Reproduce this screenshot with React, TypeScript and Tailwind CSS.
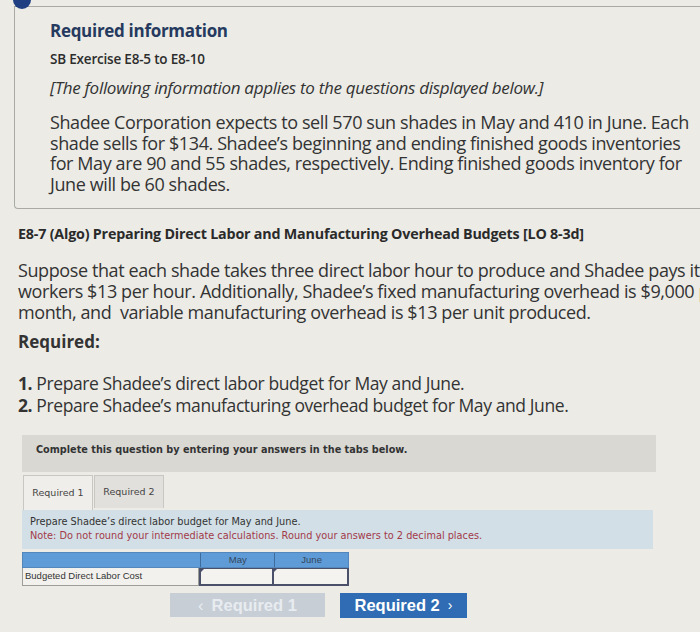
import React from 'react';

const App: React.FC = () => {
  const tabs = ['Required 1', 'Required 2'];

  return (
    <div className="w-[700px] h-[632px] overflow-hidden bg-[#ecebe6] text-[#2a2a2a] relative" style={{ fontFamily: '"Open Sans", sans-serif' }}>
      {/* Required information box */}
      <div className="relative ml-[14px] mt-[6px] h-[203px] border-l border-t border-b border-[#a9a9a6] rounded-bl-[4px] pl-[35px] pt-[12px]">
        <div className="absolute -left-[2px] -top-[16px] w-[18px] h-[18px] rounded-full bg-[#1f3f82]" />
        <h1 className="text-[17px] font-bold text-[#253a5e] leading-[24px] tracking-[-0.3px]">Required information</h1>
        <div className="mt-[8px] text-[13.5px] font-semibold text-[#2d2d2d] leading-[16px] tracking-[-0.2px]">SB Exercise E8-5 to E8-10</div>
        <p className="mt-[10px] text-[17px] italic leading-[22px] text-[#333] tracking-[-0.3px]">
          [The following information applies to the questions displayed below.]
        </p>
        <p className="mt-[13px] text-[18px] leading-[20.5px] text-[#333] tracking-[-0.4px] whitespace-nowrap">
          Shadee Corporation expects to sell 570 sun shades in May and 410 in June. Each<br />
          shade sells for $134. Shadee’s beginning and ending finished goods inventories<br />
          for May are 90 and 55 shades, respectively. Ending finished goods inventory for<br />
          June will be 60 shades.
        </p>
      </div>

      <div className="pl-[18px]">
        <h2 className="mt-[16px] text-[14.3px] font-bold leading-[18px] text-[#2a2a2a] tracking-[-0.2px] whitespace-nowrap">
          E8-7 (Algo) Preparing Direct Labor and Manufacturing Overhead Budgets [LO 8-3d]
        </h2>
        <p className="mt-[17px] text-[18px] leading-[21px] text-[#333] tracking-[-0.4px] whitespace-nowrap">
          Suppose that each shade takes three direct labor hour to produce and Shadee pays its<br />
          workers $13 per hour. Additionally, Shadee’s fixed manufacturing overhead is $9,000 per<br />
          month, and&nbsp; variable manufacturing overhead is $13 per unit produced.
        </p>
        <div className="mt-[8px] text-[17px] font-bold leading-[22px] text-[#333]">Required:</div>
        <ol className="mt-[19px] text-[17.5px] leading-[22px] text-[#333] tracking-[-0.4px]">
          <li><span className="font-bold">1.</span> Prepare Shadee’s direct labor budget for May and June.</li>
          <li><span className="font-bold">2.</span> Prepare Shadee’s manufacturing overhead budget for May and June.</li>
        </ol>
      </div>

      <div className="ml-[22px] w-[634px] mt-[19px]" style={{ fontFamily: '"DejaVu Sans", sans-serif' }}>
        <div className="h-[37px] bg-[#d9d8d3] pl-[14px] pt-[8px] text-[9.7px] font-bold text-[#333]">
          Complete this question by entering your answers in the tabs below.
        </div>

        <div className="mt-[3px] flex h-[35px]">
          {tabs.map((t, i) => (
            <div
              key={t}
              className={`w-[70px] ${i === 0 ? 'bg-[#efeeea] h-[35px]' : 'bg-[#e2e0dc] h-[33px]'} border border-[#c9c7c2] border-b-0 ml-[1px] flex items-center justify-center text-[9.5px] text-[#444]`}
            >
              {t}
            </div>
          ))}
        </div>

        <div className="h-[39px] w-[631px] bg-[#d2dfe6] pl-[8px] pt-[5px] text-[9.75px] leading-[13.5px]">
          <div className="text-[#333]">Prepare Shadee’s direct labor budget for May and June.</div>
          <div className="text-[#a23a4a]">Note: Do not round your intermediate calculations. Round your answers to 2 decimal places.</div>
        </div>

        <div className="mt-[3px] w-[327px] text-[9.5px]" style={{ fontFamily: '"Liberation Sans", Arial, sans-serif' }}>
          <div className="flex h-[16px] bg-[#5f9bd6] border border-[#5386bb]">
            <div className="w-[178px]" />
            <div className="w-[74px] border-l border-[#3e6c9c] flex items-center justify-center text-[#34465c]">May</div>
            <div className="w-[74px] border-l border-[#3e6c9c] flex items-center justify-center text-[#34465c]">June</div>
          </div>
          <div className="flex h-[18px] bg-[#f2f1ee]">
            <div className="w-[178px] border border-[#9d9c99] border-t-0 flex items-center pl-[2px] text-[#333]">Budgeted Direct Labor Cost</div>
            <div className="w-[75px] border-2 border-t border-[#4a4f6a] bg-[#f4f3f0] relative">
              <div className="absolute left-0 top-0 w-0 h-0 border-l-[3px] border-b-[3px] border-l-[#4a4f6a] border-b-transparent" />
            </div>
            <div className="w-[75px] border-2 border-t border-l-0 border-[#4a4f6a] bg-[#f4f3f0] relative">
              <div className="absolute left-0 top-0 w-0 h-0 border-l-[3px] border-b-[3px] border-l-[#4a4f6a] border-b-transparent" />
            </div>
          </div>
        </div>

        <div className="mt-[7px] flex gap-[15px] ml-[148px]" style={{ fontFamily: '"Liberation Sans", Arial, sans-serif' }}>
          <div className="w-[155px] h-[24px] bg-[#c7ced6] flex items-center justify-center text-[16.5px] font-bold text-[#e8ecf0]">
            <span className="mr-[8px] font-normal">‹</span>Required 1
          </div>
          <div className="w-[127px] h-[25px] bg-[#2f6cb3] flex items-center justify-center text-[16.5px] font-bold text-white">
            Required 2<span className="ml-[8px] font-normal text-[14px]">›</span>
          </div>
        </div>
      </div>
    </div>
  );
};

export default App;
